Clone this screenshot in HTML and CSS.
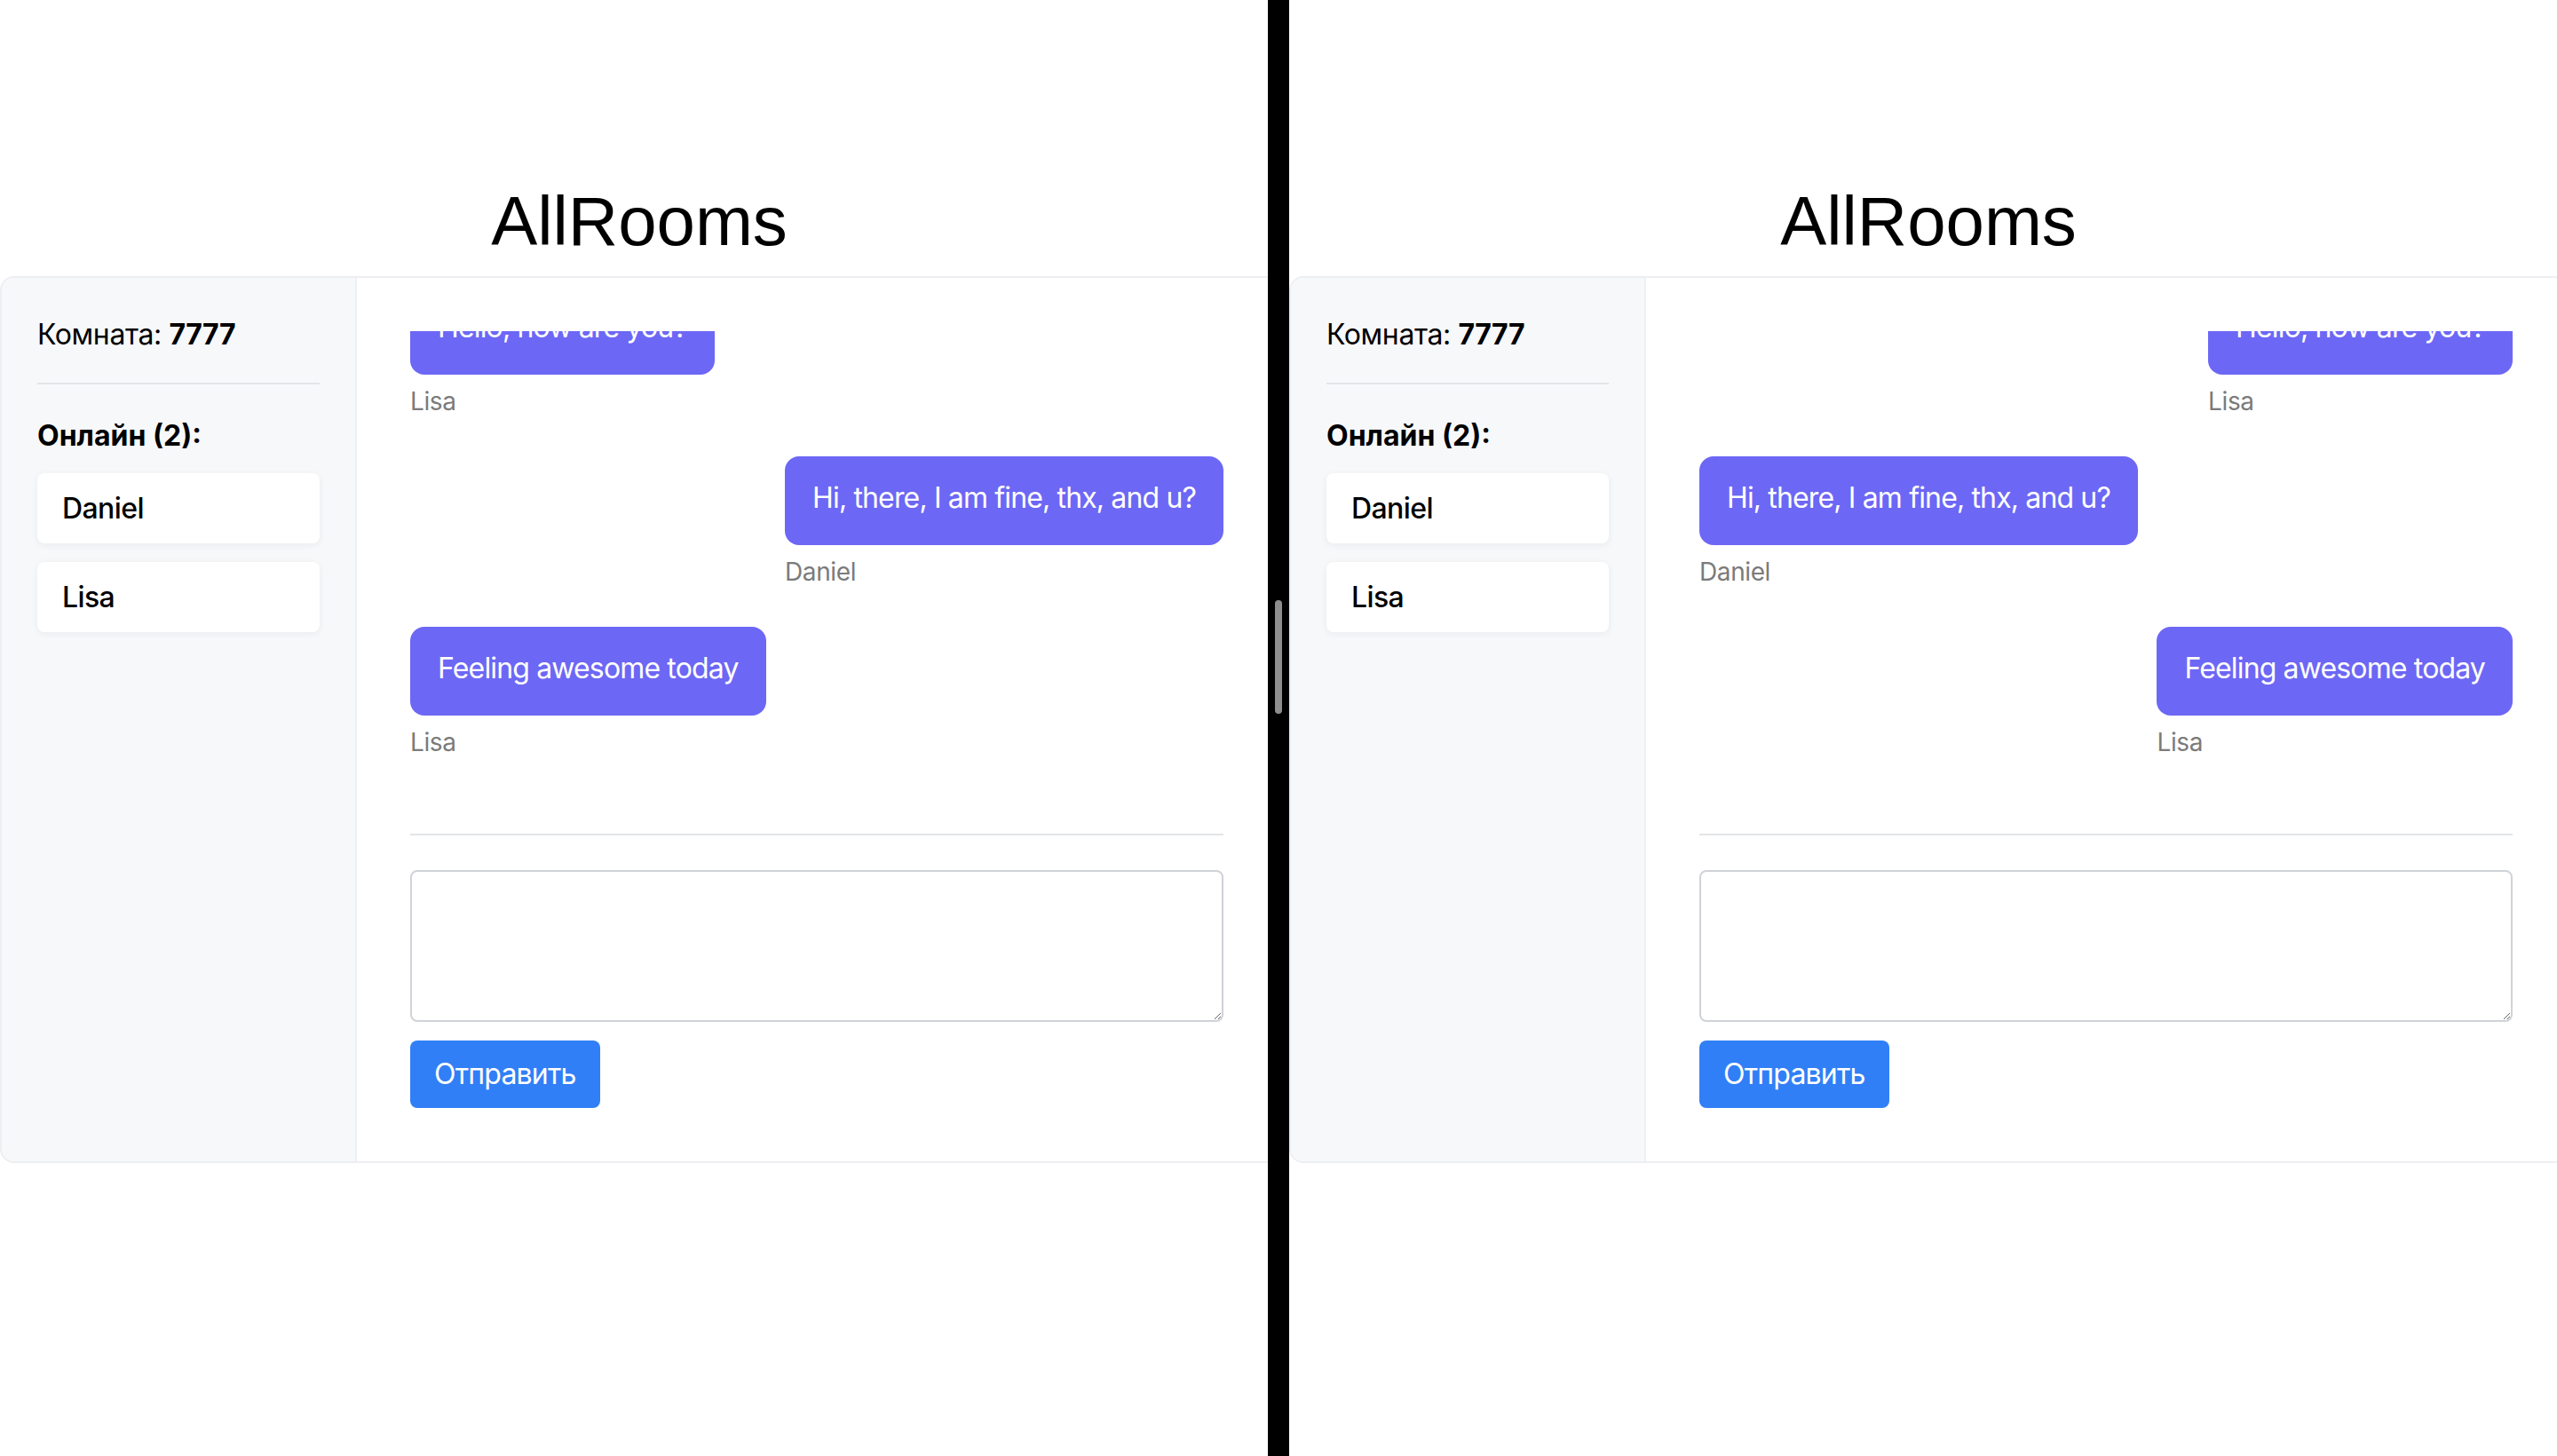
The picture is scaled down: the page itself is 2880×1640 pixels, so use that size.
FILE: index.html
```html
<!DOCTYPE html>
<html lang="ru">
<head>
<meta charset="utf-8">
<title>AllRooms</title>
<link rel="stylesheet" href="styles.css">
</head>
<body>
<div class="screen">
  <div class="pane">
    <div class="window">
      <h1 class="title">AllRooms</h1>
      <div class="room">
        <aside class="sidebar">
          <p class="room-name">Комната: <b>7777</b></p>
          <hr class="rule">
          <p class="online">Онлайн (2):</p>
          <ul class="users">
            <li class="user">Daniel</li>
            <li class="user">Lisa</li>
          </ul>
        </aside>
        <section class="chat">
          <div class="messages">
            <div class="msg"><div class="bubble">Hello, how are you?</div><div class="author">Lisa</div></div>
            <div class="msg own"><div class="bubble">Hi, there, I am fine, thx, and u?</div><div class="author">Daniel</div></div>
            <div class="msg"><div class="bubble">Feeling awesome today</div><div class="author">Lisa</div></div>
          </div>
          <hr class="rule chat-rule">
          <textarea class="input"></textarea>
          <button class="send">Отправить</button>
        </section>
      </div>
    </div>
  </div>
  <div class="divider"><div class="thumb"></div></div>
  <div class="pane">
    <div class="window">
      <h1 class="title">AllRooms</h1>
      <div class="room">
        <aside class="sidebar">
          <p class="room-name">Комната: <b>7777</b></p>
          <hr class="rule">
          <p class="online">Онлайн (2):</p>
          <ul class="users">
            <li class="user">Daniel</li>
            <li class="user">Lisa</li>
          </ul>
        </aside>
        <section class="chat">
          <div class="messages">
            <div class="msg own"><div class="bubble">Hello, how are you?</div><div class="author">Lisa</div></div>
            <div class="msg"><div class="bubble">Hi, there, I am fine, thx, and u?</div><div class="author">Daniel</div></div>
            <div class="msg own"><div class="bubble">Feeling awesome today</div><div class="author">Lisa</div></div>
          </div>
          <hr class="rule chat-rule">
          <textarea class="input"></textarea>
          <button class="send">Отправить</button>
        </section>
      </div>
    </div>
  </div>
</div>
</body>
</html>
```

FILE: styles.css
```css
* { box-sizing: border-box; }
html, body { margin: 0; padding: 0; background: #fff; }
body { font-family: Inter, "Noto Sans", sans-serif; color: #000; }

.screen {
  display: flex;
  width: 2880px;
  height: 1640px;
  overflow: hidden;
}
.pane {
  flex: none;
  width: 1428px;
  height: 1640px;
  overflow: hidden;
  background: #fff;
}
.window {
  width: 1440px;
  height: 1640px;
}
.divider {
  flex: none;
  width: 24px;
  background: #000;
  display: flex;
  justify-content: center;
}
.thumb {
  width: 8px;
  height: 128px;
  margin-top: 676px;
  border-radius: 4px;
  background: #8e8e8e;
}

.title {
  margin: 0;
  padding: 204px 0 17px;
  font-family: "Liberation Sans", Arial, sans-serif;
  font-weight: 400;
  font-size: 78px;
  line-height: 90px;
  text-align: center;
}

.room {
  display: flex;
  border: 2px solid #eceef1;
  border-radius: 16px;
  overflow: hidden;
  background: #fff;
}

.sidebar {
  flex: none;
  width: 400px;
  padding: 40px;
  background: #f7f8fa;
  border-right: 2px solid #eef0f3;
}
.room-name {
  margin: 0 0 30px;
  font-size: 32px;
  line-height: 48px;
  letter-spacing: -0.4px;
}
.room-name b { font-weight: 700; }
.rule {
  margin: 0;
  border: none;
  height: 2px;
  background: #e3e5e8;
}
.online {
  margin: 34px 0 18px;
  font-size: 32px;
  line-height: 48px;
  font-weight: 700;
}
.users {
  list-style: none;
  margin: 0;
  padding: 0;
  display: flex;
  flex-direction: column;
  gap: 21px;
}
.user {
  background: #fff;
  border-radius: 8px;
  padding: 15.5px 28px;
  font-size: 32px;
  line-height: 48px;
  font-weight: 500;
  letter-spacing: -0.6px;
  box-shadow: 0 2px 8px rgba(20, 30, 50, 0.06);
}

.chat {
  flex: 1;
  min-width: 0;
  padding: 60px;
  display: flex;
  flex-direction: column;
}
.messages {
  height: 528px;
  overflow: hidden;
  display: flex;
  flex-direction: column;
  justify-content: flex-end;
  gap: 42px;
  padding-bottom: 45px;
}
.msg {
  flex: none;
  display: flex;
  flex-direction: column;
  align-items: flex-start;
  align-self: flex-start;
}
.msg.own { align-self: flex-end; }
.bubble {
  background: #6d67f5;
  color: #fff;
  border-radius: 16px;
  padding: 23px 31px 29px;
  font-size: 32px;
  line-height: 48px;
  letter-spacing: -0.85px;
  white-space: nowrap;
}
.author {
  margin-top: 10px;
  font-size: 28px;
  line-height: 40px;
  letter-spacing: -0.4px;
  color: #7b7b7b;
}
.chat-rule { margin: 38px 0 39px; }
.input {
  display: block;
  width: 100%;
  height: 171px;
  border: 2px solid #cfd3d8;
  border-radius: 8px;
  background: #fff;
  font-family: inherit;
  font-size: 32px;
  margin: 0;
}
.send {
  align-self: flex-start;
  margin-top: 21px;
  padding: 14px 27px;
  border: none;
  border-radius: 8px;
  background: #317ff6;
  color: #fff;
  font-family: Inter, "Noto Sans", sans-serif;
  font-size: 32px;
  line-height: 48px;
  letter-spacing: -0.8px;
}
```
